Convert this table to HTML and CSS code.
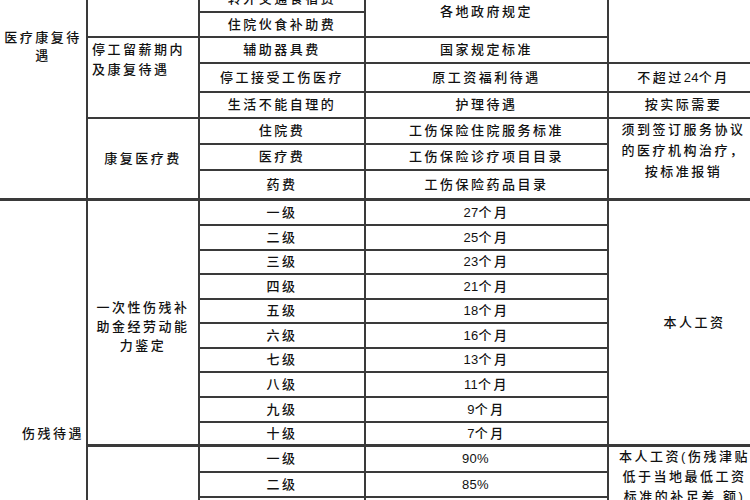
FILE: index.html
```html
<!DOCTYPE html>
<html lang="zh-CN">
<head>
<meta charset="utf-8">
<title>工伤待遇</title>
<link rel="stylesheet" href="styles.css">
</head>
<body>
<table class="t">
  <colgroup><col class="c1"><col class="c2"><col class="c3"><col class="c4"><col class="c5"></colgroup>
  <tr class="r26"><td rowspan="8" class="g1 k">医疗康复待<br>遇</td><td rowspan="2"></td><td>转外交通食宿费</td><td rowspan="2">各地政府规定</td><td rowspan="3"></td></tr>
  <tr class="r25"><td>住院伙食补助费</td></tr>
  <tr class="r26"><td rowspan="3" class="tl">停工留薪期内<br>及康复待遇</td><td>辅助器具费</td><td>国家规定标准</td></tr>
  <tr class="r29"><td>停工接受工伤医疗</td><td>原工资福利待遇</td><td>不超过<span class="n">24</span>个月</td></tr>
  <tr class="r26"><td>生活不能自理的</td><td>护理待遇</td><td>按实际需要</td></tr>
  <tr class="r26"><td rowspan="3" class="k">康复医疗费</td><td>住院费</td><td>工伤保险住院服务标准</td><td rowspan="3" class="note k">须到签订服务协议<br>的医疗机构治疗，<br>按标准报销</td></tr>
  <tr class="r26"><td>医疗费</td><td>工伤保险诊疗项目目录</td></tr>
  <tr class="r30 kr"><td>药费</td><td>工伤保险药品目录</td></tr>
  <tr class="r25"><td rowspan="13" class="g2">伤残待遇</td><td rowspan="10" class="multi k">一次性伤残补<br>助金经劳动能<br>力鉴定</td><td>一级</td><td><span class="n">27</span>个月</td><td rowspan="10" class="wage k">本人工资</td></tr>
  <tr class="r25"><td>二级</td><td><span class="n">25</span>个月</td></tr>
  <tr class="r24"><td>三级</td><td><span class="n">23</span>个月</td></tr>
  <tr class="r25"><td>四级</td><td><span class="n">21</span>个月</td></tr>
  <tr class="r24"><td>五级</td><td><span class="n">18</span>个月</td></tr>
  <tr class="r25"><td>六级</td><td><span class="n">16</span>个月</td></tr>
  <tr class="r24"><td>七级</td><td><span class="n">13</span>个月</td></tr>
  <tr class="r25"><td>八级</td><td><span class="n">11</span>个月</td></tr>
  <tr class="r25"><td>九级</td><td><span class="n">9</span>个月</td></tr>
  <tr class="r24 kr"><td>十级</td><td><span class="n">7</span>个月</td></tr>
  <tr class="r26"><td rowspan="3"></td><td>一级</td><td class="pct"><span class="n">90%</span></td><td rowspan="3" class="note2">本人工资(伤残津贴<br>低于当地最低工资<br>标准的补足差 额)</td></tr>
  <tr class="r25"><td>二级</td><td class="pct"><span class="n">85%</span></td></tr>
  <tr class="r25"><td>三级</td><td class="pct"><span class="n">80%</span></td></tr>
</table>
</body>
</html>
```

FILE: styles.css
```css
html, body {
  margin: 0;
  padding: 0;
  background: #ffffff;
}
body {
  width: 750px;
  height: 500px;
  overflow: hidden;
}
.t {
  margin-top: -13px;
  border-collapse: separate;
  border-spacing: 0;
  table-layout: fixed;
  width: 760px;
  font-family: "Liberation Sans", "Noto Sans CJK SC", sans-serif;
  font-size: 13px;
  font-weight: 500;
  letter-spacing: 2.5px;
  color: #111111;
}
.c1 { width: 88px; }
.c2 { width: 112px; }
.c3 { width: 166px; }
.c4 { width: 243px; }
.c5 { width: 151px; }
.t td {
  box-sizing: border-box;
  padding: 0;
  border-right: 2px solid #3a3a3a;
  border-bottom: 2px solid #3a3a3a;
  text-align: center;
  vertical-align: middle;
  white-space: nowrap;
  line-height: 20px;
  overflow: visible;
}
.n { letter-spacing: 0.3px; }
.r24 { height: 24px; }
.r25 { height: 25px; }
.r26 { height: 26px; }
.r29 { height: 29px; }
.r30 { height: 30px; }
.kr > td, .t td.k { border-bottom-width: 3px; }
.t td.g1 {
  vertical-align: top;
  padding-top: 42px;
  line-height: 18px;
}
.t td.g2 {
  vertical-align: top;
  text-align: right;
  padding-top: 224px;
  padding-right: 2px;
  line-height: 18px;
}
.t td.tl {
  vertical-align: top;
  text-align: left;
  padding-top: 2px;
  padding-left: 4px;
  line-height: 20px;
}
.t td.multi {
  line-height: 19px;
  padding-top: 8px;
}
.t td.note {
  vertical-align: top;
  line-height: 21px;
}
.t td.wage {
  padding-left: 22px;
}
.t td.pct {
  padding-right: 22px;
}
.t td.note2 {
  vertical-align: top;
  line-height: 20px;
  padding-left: 2px;
}
```
